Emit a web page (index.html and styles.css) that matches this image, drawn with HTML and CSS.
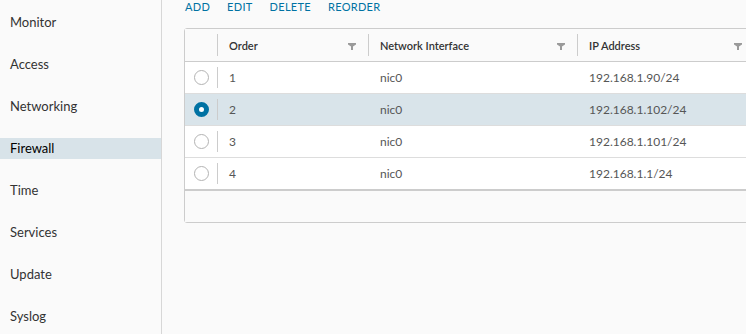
FILE: index.html
```html
<!DOCTYPE html>
<html lang="en">
<head>
    <meta charset="UTF-8">
    <meta name="viewport" content="width=device-width, initial-scale=1.0">
    <title>Firewall</title>
    <link rel="stylesheet" href="styles.css">
</head>
<body>
    <nav class="sidebar">
        <a class="nav-item">Monitor</a>
        <a class="nav-item">Access</a>
        <a class="nav-item">Networking</a>
        <a class="nav-item active">Firewall</a>
        <a class="nav-item">Time</a>
        <a class="nav-item">Services</a>
        <a class="nav-item">Update</a>
        <a class="nav-item">Syslog</a>
    </nav>
    <main class="content">
        <div class="actions">
            <button class="action">Add</button>
            <button class="action">Edit</button>
            <button class="action">Delete</button>
            <button class="action">Reorder</button>
        </div>
        <div class="datagrid">
            <div class="row header">
                <div class="cell select"><span class="sep"></span></div>
                <div class="cell">Order<svg class="filter" viewBox="0 0 8 7"><path d="M0 0h8v1.5L5 3.5V7H3V3.5L0 1.5z"/></svg><span class="sep"></span></div>
                <div class="cell">Network Interface<svg class="filter" viewBox="0 0 8 7"><path d="M0 0h8v1.5L5 3.5V7H3V3.5L0 1.5z"/></svg><span class="sep"></span></div>
                <div class="cell">IP Address<svg class="filter" viewBox="0 0 8 7"><path d="M0 0h8v1.5L5 3.5V7H3V3.5L0 1.5z"/></svg></div>
            </div>
            <div class="row">
                <div class="cell select"><span class="radio"></span><span class="sep"></span></div>
                <div class="cell">1</div>
                <div class="cell">nic0</div>
                <div class="cell">192.168.1.90/24</div>
            </div>
            <div class="row selected">
                <div class="cell select"><span class="radio checked"></span><span class="sep"></span></div>
                <div class="cell">2</div>
                <div class="cell">nic0</div>
                <div class="cell">192.168.1.102/24</div>
            </div>
            <div class="row">
                <div class="cell select"><span class="radio"></span><span class="sep"></span></div>
                <div class="cell">3</div>
                <div class="cell">nic0</div>
                <div class="cell">192.168.1.101/24</div>
            </div>
            <div class="row last">
                <div class="cell select"><span class="radio"></span><span class="sep"></span></div>
                <div class="cell">4</div>
                <div class="cell">nic0</div>
                <div class="cell">192.168.1.1/24</div>
            </div>
            <div class="footer"></div>
        </div>
    </main>
</body>
</html>
```

FILE: styles.css
```css
html, body {
    height: 100%;
}

body {
    display: flex;
    margin: 0;
    background-color: #fafafa;
    font-family: Lato, "Noto Sans", sans-serif;
    color: #565656;
    overflow: hidden;
}

.sidebar {
    width: 161px;
    flex-shrink: 0;
    display: flex;
    flex-direction: column;
    gap: 21px;
    padding-top: 12px;
    border-right: 1px solid #d7d7d7;
    background-color: #fafafa;
}

.nav-item {
    height: 21px;
    line-height: 21px;
    padding-left: 10px;
    font-size: 13px;
    color: #333;
}

.nav-item.active {
    background-color: #d8e3e9;
    color: #000;
}

.content {
    flex: 1;
    padding-left: 22px;
    overflow: hidden;
}

.actions {
    display: flex;
    gap: 17px;
    height: 14px;
    margin-bottom: 14px;
    padding-left: 1px;
}

.action {
    padding: 0;
    border: none;
    background: none;
    font-family: inherit;
    font-size: 11px;
    line-height: 14px;
    letter-spacing: 0.3px;
    text-transform: uppercase;
    color: #0072a3;
}

.datagrid {
    width: 570px;
    border: 1px solid #ccc;
    border-radius: 3px;
    background-color: #fff;
}

.row {
    display: grid;
    grid-template-columns: 33px 151px 209px 1fr;
    height: 31px;
    border-bottom: 1px solid #ddd;
}

.row.header {
    height: 32px;
    background-color: #fafafa;
    border-bottom-color: #ccc;
    font-weight: 600;
    color: #333;
}

.row.selected {
    background-color: #d9e4ea;
}

.row.last {
    border-bottom: 2px solid #ccc;
}

.cell {
    position: relative;
    display: flex;
    align-items: center;
    padding-left: 11px;
    font-size: 12px;
}

.header .cell {
    font-size: 11px;
}

.cell.select {
    padding-left: 0;
    justify-content: center;
}

.sep {
    position: absolute;
    right: 0;
    top: 5px;
    bottom: 5px;
    width: 1px;
    background-color: #ccc;
}

.filter {
    position: absolute;
    right: 13px;
    top: 14px;
    width: 8px;
    height: 7px;
    fill: #9a9a9a;
}

.radio {
    box-sizing: border-box;
    width: 15px;
    height: 15px;
    border: 1px solid #b3b3b3;
    border-radius: 50%;
    background-color: #fff;
}

.radio.checked {
    border: 5px solid #0072a3;
    background-color: #fff;
}

.footer {
    height: 31px;
    background-color: #fafafa;
}
```
